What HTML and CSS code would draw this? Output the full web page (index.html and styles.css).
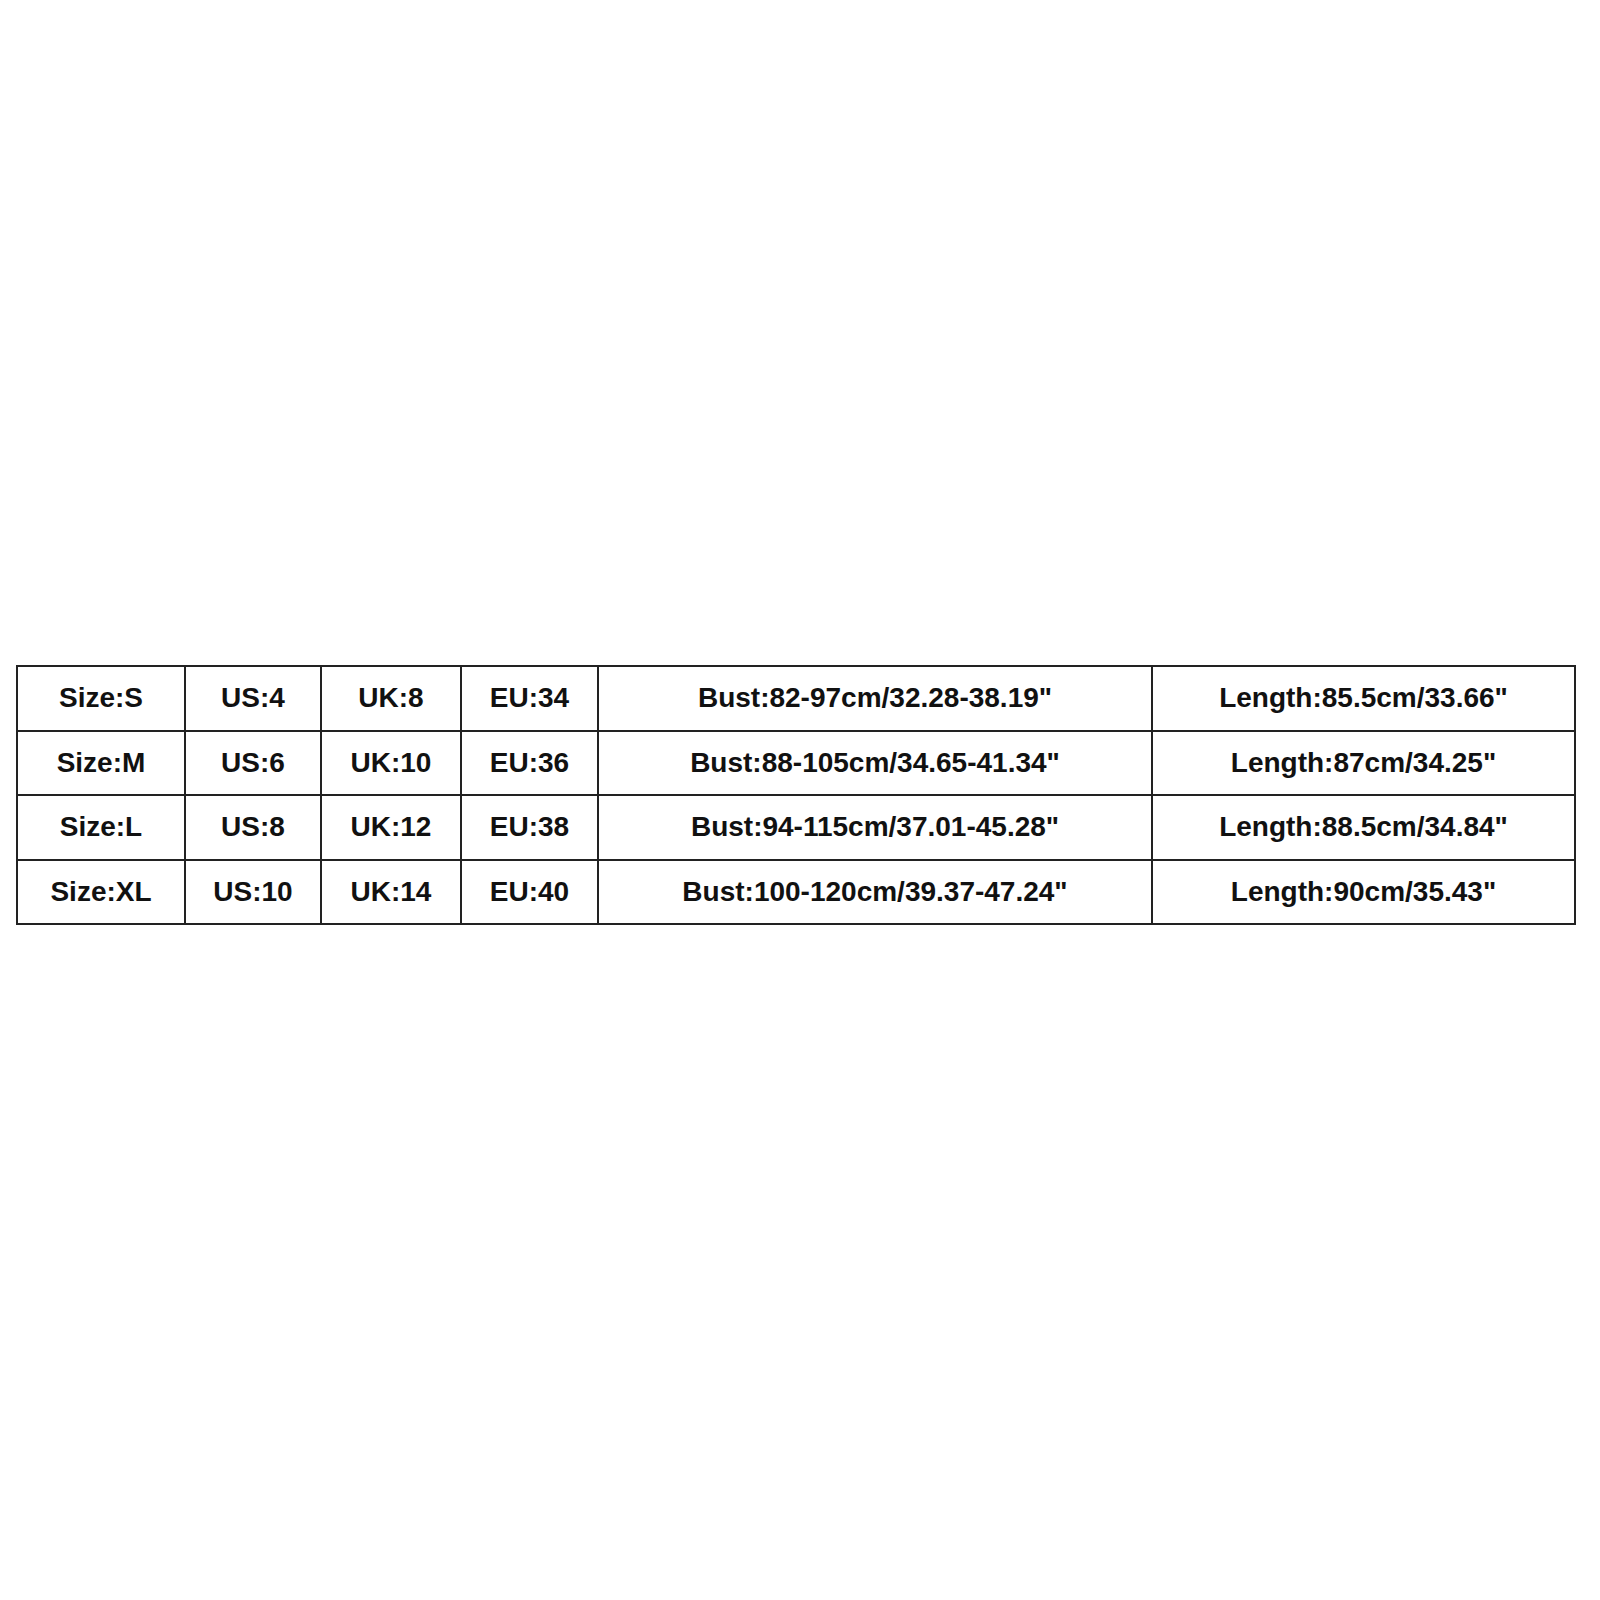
FILE: index.html
```html
<!DOCTYPE html>
<html>
<head>
<meta charset="utf-8">
<link rel="stylesheet" href="styles.css">
</head>
<body>
<div class="page">
<table class="sizes">
<colgroup>
<col class="c1"><col class="c2"><col class="c3"><col class="c4"><col class="c5"><col class="c6">
</colgroup>
<tbody>
<tr><td>Size:S</td><td>US:4</td><td>UK:8</td><td>EU:34</td><td>Bust:82-97cm/32.28-38.19"</td><td>Length:85.5cm/33.66"</td></tr>
<tr><td>Size:M</td><td>US:6</td><td>UK:10</td><td>EU:36</td><td>Bust:88-105cm/34.65-41.34"</td><td>Length:87cm/34.25"</td></tr>
<tr><td>Size:L</td><td>US:8</td><td>UK:12</td><td>EU:38</td><td>Bust:94-115cm/37.01-45.28"</td><td>Length:88.5cm/34.84"</td></tr>
<tr><td>Size:XL</td><td>US:10</td><td>UK:14</td><td>EU:40</td><td>Bust:100-120cm/39.37-47.24"</td><td>Length:90cm/35.43"</td></tr>
</tbody>
</table>
</div>
</body>
</html>
```
FILE: styles.css
```css
html, body {
  margin: 0;
  padding: 0;
  background: #ffffff;
}
.page {
  width: 1600px;
  height: 1600px;
  padding: 665px 0 0 16px;
  box-sizing: border-box;
}
.sizes {
  border-collapse: collapse;
  table-layout: fixed;
  width: 1558px;
  font-family: "Liberation Sans", Arial, sans-serif;
  font-weight: bold;
  font-size: 28px;
  color: #111111;
}
.sizes td {
  border: 2px solid #222222;
  height: 62.5px;
  padding: 0;
  text-align: center;
  vertical-align: middle;
  white-space: nowrap;
}
.c1 { width: 168px; }
.c2 { width: 136px; }
.c3 { width: 140px; }
.c4 { width: 137px; }
.c5 { width: 554px; }
.c6 { width: 423px; }
```
